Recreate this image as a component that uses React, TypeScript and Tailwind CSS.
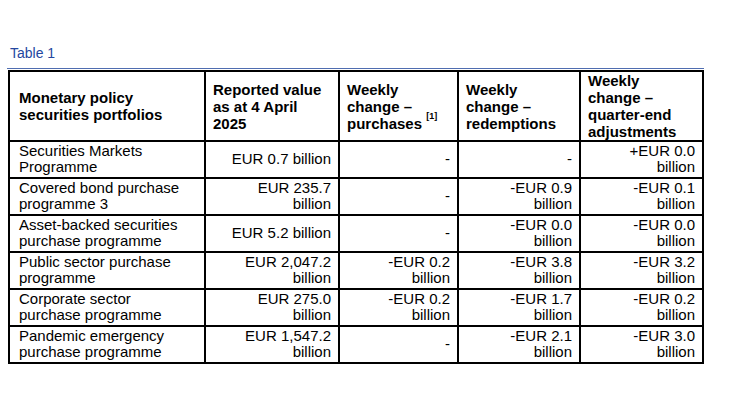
import type { ReactNode } from "react"

type Row = {
    name: ReactNode,
    value: ReactNode,
    purchases: ReactNode,
    redemptions: ReactNode,
    quarter: ReactNode,
}

const rows: Row[] = [
    { name: <>Securities Markets<br />Programme</>, value: "EUR 0.7 billion", purchases: "-", redemptions: "-", quarter: <>+EUR 0.0<br />billion</> },
    { name: <>Covered bond purchase<br />programme 3</>, value: <>EUR 235.7<br />billion</>, purchases: "-", redemptions: <>-EUR 0.9<br />billion</>, quarter: <>-EUR 0.1<br />billion</> },
    { name: <>Asset-backed securities<br />purchase programme</>, value: "EUR 5.2 billion", purchases: "-", redemptions: <>-EUR 0.0<br />billion</>, quarter: <>-EUR 0.0<br />billion</> },
    { name: <>Public sector purchase<br />programme</>, value: <>EUR 2,047.2<br />billion</>, purchases: <>-EUR 0.2<br />billion</>, redemptions: <>-EUR 3.8<br />billion</>, quarter: <>-EUR 3.2<br />billion</> },
    { name: <>Corporate sector<br />purchase programme</>, value: <>EUR 275.0<br />billion</>, purchases: <>-EUR 0.2<br />billion</>, redemptions: <>-EUR 1.7<br />billion</>, quarter: <>-EUR 0.2<br />billion</> },
    { name: <>Pandemic emergency<br />purchase programme</>, value: <>EUR 1,547.2<br />billion</>, purchases: "-", redemptions: <>-EUR 2.1<br />billion</>, quarter: <>-EUR 3.0<br />billion</> },
]

const Head = ({ children, first }: { children: ReactNode, first?: boolean }) => <th
    className={`border-2 border-black align-middle text-left font-bold leading-[17px] ${first ? "pl-[9px]" : "pl-[7px]"} pr-1 py-0`}>
    {children}
</th>

const Cell = ({ children }: { children: ReactNode }) => <td
    className="border-2 border-black align-middle text-right leading-[16px] pr-[7px] pl-1 pt-px pb-[2px]">
    {children}
</td>

export default function App() {
    return <div className="w-[730px] h-[410px] bg-white pl-[8px] pt-[45px] text-black"
        style={{ fontFamily: '"Liberation Sans", Arial, sans-serif' }}>
        <div className="pl-[2px] text-[14px] leading-[16px] text-[#2447a0]">Table 1</div>
        <div className="mt-[7px] -ml-px h-px w-[697px] bg-[#4f6db0]" />
        <table className="mt-px table-fixed border-collapse w-[694px] text-[15px]">
            <colgroup>
                <col className="w-[196px]" />
                <col className="w-[134px]" />
                <col className="w-[119px]" />
                <col className="w-[122px]" />
                <col className="w-[123px]" />
            </colgroup>
            <thead>
                <tr className="h-[70px]">
                    <Head first>Monetary policy<br />securities portfolios</Head>
                    <Head>Reported value<br />as at 4 April<br />2025</Head>
                    <Head>Weekly<br />change –<br />purchases <sup className="text-[9px] align-top relative top-[1px]">[1]</sup></Head>
                    <Head>Weekly<br />change –<br />redemptions</Head>
                    <Head>Weekly<br />change –<br />quarter-end<br />adjustments</Head>
                </tr>
            </thead>
            <tbody>
                {rows.map((row, i) => <tr key={i}>
                    <td className="border-2 border-black align-middle text-left leading-[16px] pl-[9px] pr-1 pt-px pb-[2px]">
                        {row.name}
                    </td>
                    <Cell>{row.value}</Cell>
                    <Cell>{row.purchases}</Cell>
                    <Cell>{row.redemptions}</Cell>
                    <Cell>{row.quarter}</Cell>
                </tr>)}
            </tbody>
        </table>
    </div>
}
